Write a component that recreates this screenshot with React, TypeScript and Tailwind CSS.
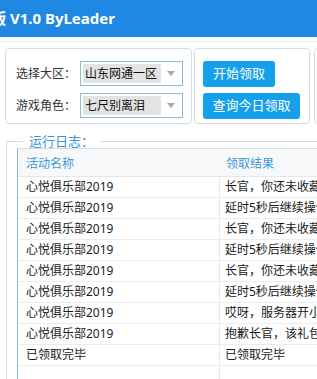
import React from 'react';

const ROWS = [
  ['心悦俱乐部2019', '长官，你还未收藏'],
  ['心悦俱乐部2019', '延时5秒后继续操作'],
  ['心悦俱乐部2019', '长官，你还未收藏'],
  ['心悦俱乐部2019', '延时5秒后继续操作'],
  ['心悦俱乐部2019', '长官，你还未收藏'],
  ['心悦俱乐部2019', '延时5秒后继续操作'],
  ['心悦俱乐部2019', '哎呀，服务器开小差了'],
  ['心悦俱乐部2019', '抱歉长官，该礼包已领取'],
  ['已领取完毕', '已领取完毕'],
];

function Combo({ value }: { value: string }) {
  return (
    <div className="flex h-[25px] w-[103px] items-center border border-[#8cbfcc] bg-white p-[2px]">
      <div className="flex h-full w-[78px] items-center bg-[#e3e3e3] pl-[2px] text-[12px] text-[#111] whitespace-nowrap">
        {value}
      </div>
      <div className="flex flex-1 items-center justify-center">
        <svg width="8" height="5" viewBox="0 0 8 5">
          <path d="M0 0h8L4 5z" fill="#a8a8a8" />
        </svg>
      </div>
    </div>
  );
}

export default function App() {
  return (
    <div
      className="relative flex h-[379px] w-[317px] flex-col overflow-hidden bg-white"
      style={{ fontFamily: '"Noto Sans", "Noto Sans CJK SC", sans-serif' }}
    >
      {/* Title bar */}
      <div className="flex h-[37px] shrink-0 items-center bg-[#1f88e3] text-white">
        <span className="ml-[-9px] whitespace-nowrap text-[15px] font-bold">版 V1.0 ByLeader</span>
      </div>
      <div className="mt-[4px] h-px shrink-0 bg-[#e4edf3]" />

      {/* Top panels */}
      <div className="mt-[6px] flex shrink-0 pl-[5px]">
        <div className="flex h-[76px] w-[187px] shrink-0 flex-col gap-[7px] rounded-[4px] border border-[#d3dde3] pl-[10px] pt-[12px]">
          <div className="flex items-center">
            <span className="w-[64px] text-[12px] text-[#333]">选择大区：</span>
            <Combo value="山东网通一区" />
          </div>
          <div className="flex items-center">
            <span className="w-[64px] text-[12px] text-[#333]">游戏角色：</span>
            <Combo value="七尺别离泪" />
          </div>
        </div>
        <div className="ml-[2px] flex h-[76px] w-[116px] shrink-0 flex-col items-start gap-[6px] rounded-[4px] border border-[#d3dde3] pl-[8px] pt-[12px]">
          <button className="flex h-[26px] w-[72px] items-center justify-center rounded-[3px] bg-[#14a0ea] text-[13px] text-white">
            开始领取
          </button>
          <button className="flex h-[26px] w-[97px] items-center justify-center rounded-[3px] bg-[#14a0ea] text-[13px] text-white">
            查询今日领取
          </button>
        </div>
        <div className="ml-[4px] h-[76px] w-[40px] shrink-0 rounded-[4px] border border-[#d3dde3]" />
      </div>

      {/* Log */}
      <fieldset className="ml-[6px] mt-[11px] flex min-h-0 flex-1 flex-col border-l border-t border-[#d3dde3] pl-[10px]">
        <legend className="ml-[6px] px-[6px] text-[13px] leading-[12px] text-[#3a98d8]">运行日志：</legend>
        <div className="mt-[1px] flex h-full flex-col border-l border-t border-[#8fbcd9] border-t-[#d5dde2] text-[12px] text-[#1a1a1a]">
          <div className="flex h-[28px] shrink-0 items-center border-b border-[#e6e6e6] bg-[#f7f8f9] pt-[2px] text-[#3d9ad6]">
            <span className="w-[202px] shrink-0 pl-[8px]">活动名称</span>
            <span className="pl-[6px] whitespace-nowrap">领取结果</span>
          </div>
          {ROWS.map(([a, b], i) => (
            <div key={i} className="flex h-[21px] shrink-0 items-center border-b border-[#ececec]">
              <span className="flex h-full w-[202px] shrink-0 items-center border-r border-[#e8e8e8] pl-[8px]">{a}</span>
              <span className="pl-[5px] whitespace-nowrap">{b}</span>
            </div>
          ))}
          <div className="flex flex-1">
            <div className="w-[202px] shrink-0 border-r border-[#e8e8e8]" />
          </div>
        </div>
      </fieldset>
    </div>
  );
}
